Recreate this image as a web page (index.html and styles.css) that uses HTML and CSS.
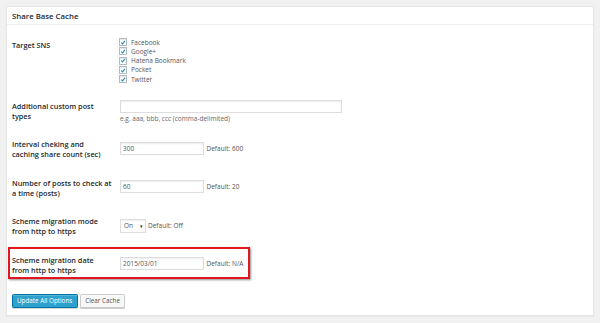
FILE: index.html
```html
<!DOCTYPE html>
<html lang="en">
<head>
<meta charset="utf-8">
<title>Share Base Cache</title>
<link rel="stylesheet" href="styles.css">
</head>
<body>
<div class="page">
  <div class="postbox">
    <h3 class="postbox-title">Share Base Cache</h3>
    <div class="inside">
      <div class="row row-sns">
        <div class="th">Target SNS</div>
        <div class="td td-checks">
          <label class="check"><span class="box"><svg viewBox="0 0 10 10"><path d="M2 5.2 L4.2 7.4 L8.3 2.4" /></svg></span>Facebook</label>
          <label class="check"><span class="box"><svg viewBox="0 0 10 10"><path d="M2 5.2 L4.2 7.4 L8.3 2.4" /></svg></span>Google+</label>
          <label class="check"><span class="box"><svg viewBox="0 0 10 10"><path d="M2 5.2 L4.2 7.4 L8.3 2.4" /></svg></span>Hatena Bookmark</label>
          <label class="check"><span class="box"><svg viewBox="0 0 10 10"><path d="M2 5.2 L4.2 7.4 L8.3 2.4" /></svg></span>Pocket</label>
          <label class="check"><span class="box"><svg viewBox="0 0 10 10"><path d="M2 5.2 L4.2 7.4 L8.3 2.4" /></svg></span>Twitter</label>
        </div>
      </div>
      <div class="row">
        <div class="th">Additional custom post<br>types</div>
        <div class="td td-wide">
          <div class="input input-wide"></div>
          <div class="desc">e.g. aaa, bbb, ccc (comma-delimited)</div>
        </div>
      </div>
      <div class="row">
        <div class="th">Interval cheking and<br>caching share count (sec)</div>
        <div class="td">
          <div class="input">300</div>
          <span class="default">Default: 600</span>
        </div>
      </div>
      <div class="row">
        <div class="th">Number of posts to check at<br>a time (posts)</div>
        <div class="td">
          <div class="input">60</div>
          <span class="default">Default: 20</span>
        </div>
      </div>
      <div class="row">
        <div class="th">Scheme migration mode<br>from http to https</div>
        <div class="td">
          <div class="select">On <span class="arrow">&#9662;</span></div>
          <span class="default">Default: Off</span>
        </div>
      </div>
      <div class="row row-highlight">
        <div class="th">Scheme migration date<br>from http to https</div>
        <div class="td">
          <div class="input">2015/03/01</div>
          <span class="default">Default: N/A</span>
        </div>
      </div>
      <div class="actions">
        <span class="button button-primary">Update All Options</span>
        <span class="button">Clear Cache</span>
      </div>
    </div>
  </div>
</div>
</body>
</html>
```

FILE: styles.css
```css
html, body {
  margin: 0;
  padding: 0;
  background: #f1f1f1;
}
body {
  font-family: "Open Sans", "Liberation Sans", sans-serif;
  color: #444;
  font-size: 6.5px;
}
.page {
  padding: 6px 6px 7px 6px;
}
.postbox {
  background: #fff;
  border: 1px solid #e5e5e5;
  box-shadow: 0 1px 1px rgba(0,0,0,0.04);
  width: 586px;
  height: 308px;
}
.postbox-title {
  margin: 0;
  height: 17px;
  border-bottom: 1px solid #eee;
  padding: 0 5px;
  font-size: 7.8px;
  font-weight: 600;
  line-height: 19px;
  color: #23282d;
}
.inside {
  padding: 5px 5px 0 5px;
}
.row {
  display: flex;
  position: relative;
}
.th {
  width: 98px;
  flex: none;
  padding: 10px 10px 8.5px 0;
  font-size: 7.3px;
  line-height: 10px;
  font-weight: 600;
  color: #23282d;
  white-space: nowrap;
}
.td {
  padding-top: 12.5px;
  display: flex;
  align-items: center;
  align-self: flex-start;
}
.td-wide {
  display: block;
  padding-top: 9.5px;
}
.td-checks {
  display: block;
  padding-top: 7.5px;
  padding-bottom: 6.5px;
}
.check {
  display: flex;
  align-items: center;
  height: 9.33px;
  color: #555;
  line-height: 9.33px;
  margin-left: -1px;
}
.box {
  width: 6px;
  height: 6px;
  border: 1px solid #b4b9be;
  box-shadow: inset 0 1px 1px rgba(0,0,0,0.1);
  margin-right: 4px;
  display: inline-flex;
  align-items: center;
  justify-content: center;
  background: #fff;
}
.box svg {
  width: 7px;
  height: 7px;
  fill: none;
  stroke: #1e8cbe;
  stroke-width: 1.8;
}
.input {
  width: 80px;
  height: 11px;
  border: 1px solid #ddd;
  box-shadow: inset 0 1px 2px rgba(0,0,0,0.07);
  padding: 0 0 0 2px;
  line-height: 11px;
  color: #555;
  font-size: 6.5px;
  margin-right: 2.5px;
}
.input-wide {
  width: 218px;
}
.desc {
  line-height: 10px;
  padding-top: 1px;
  color: #666;
}
.default {
  color: #555;
}
.select {
  width: 21px;
  height: 12px;
  border: 1px solid #ddd;
  box-shadow: inset 0 1px 2px rgba(0,0,0,0.07);
  padding: 0 0 0 3px;
  line-height: 12px;
  color: #555;
  margin-right: 2px;
  display: flex;
  justify-content: space-between;
}
.arrow {
  font-size: 5px;
  color: #222;
  padding-right: 2px;
}
.row-highlight::after {
  content: "";
  position: absolute;
  left: -4.5px;
  top: 2.5px;
  width: 238px;
  height: 27.5px;
  border: 2.7px solid #e3161d;
  box-shadow: 1px 1px 2px rgba(0,0,0,0.45);
}
.actions {
  display: flex;
  gap: 2px;
  padding-top: 10.5px;
  margin-left: -0.5px;
}
.button {
  height: 12px;
  line-height: 12px;
  padding: 0 4.5px;
  border: 1px solid #ccc;
  background: #f7f7f7;
  box-shadow: 0 1px 0 #ccc;
  border-radius: 1.5px;
  color: #555;
  font-size: 6.3px;
}
.button-primary {
  background: #2ea2cc;
  border-color: #0074a2;
  box-shadow: inset 0 1px 0 rgba(120,200,230,0.5), 0 1px 0 rgba(0,0,0,0.15);
  color: #fff;
}
```
